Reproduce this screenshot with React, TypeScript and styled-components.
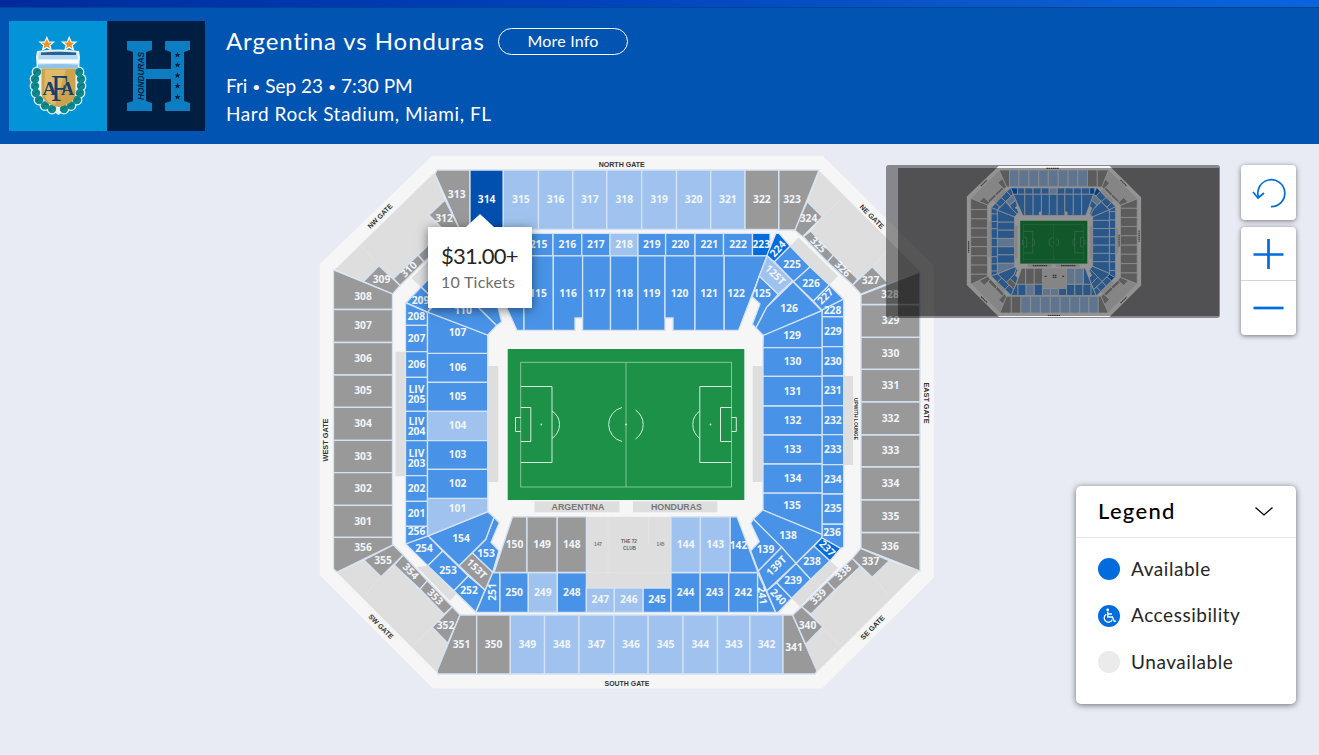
import React, {FC} from 'react';
import styled, {createGlobalStyle} from 'styled-components';

const BRAND = '#0154b1';
const ACTION = '#026cdf';
const SURFACE = '#e8ebf3';
const FONT = 'Lato, "Open Sans", sans-serif';

const GlobalStyle = createGlobalStyle`
  * { box-sizing: border-box; }
  body { margin: 0; background: ${SURFACE}; font-family: ${FONT}; overflow: hidden; }
`;

const Page = styled.div`
  display: flex;
  flex-direction: column;
  height: 755px;
`;
const TopStrip = styled.div`
  height: 8px;
  flex: none;
  border-bottom: 1px solid #02458f;
  background: linear-gradient(90deg, #002b9c 0%, #0043bd 45%, #0a58cb 75%, #0a64de 100%);
`;
const Header = styled.header`
  display: flex;
  flex: none;
  height: 136px;
  padding: 13px 9px 0;
  background: ${BRAND};
  color: #fff;
`;
const Teams = styled.div`
  display: flex;
  width: 196px;
  height: 110px;
`;
const Info = styled.div`
  margin-left: 21px;
`;
const TitleRow = styled.div`
  display: flex;
  align-items: center;
  height: 40px;
`;
const Title = styled.h1`
  margin: 0;
  width: 258px;
  padding-bottom: 2px;
  font-size: 24px;
  font-weight: 400;
  letter-spacing: 0.92px;
  white-space: nowrap;
`;
const MoreInfo = styled.button`
  width: 130px;
  height: 27px;
  margin-left: 14px;
  padding: 0 0 2px;
  border: 1px solid #fff;
  border-radius: 14px;
  background: none;
  color: #fff;
  font: 400 16px ${FONT};
  letter-spacing: 0.2px;
`;
const Detail = styled.div<{$spacing: string}>`
  font-size: 19px;
  line-height: 27px;
  letter-spacing: ${p => p.$spacing};
`;
const Bullet = styled.small`
  font-size: 14px;
  vertical-align: 1px;
`;
const Details = styled.div`
  margin-top: 11px;
`;

const MapArea = styled.main`
  position: relative;
  flex: 1;
`;
const MapSvg = styled.svg`
  display: block;
  width: 1319px;
  height: 611px;
`;
const Tooltip = styled.div`
  position: absolute;
  left: 428px;
  top: 83px;
  width: 104px;
  height: 81px;
  padding: 14px 0 0 13px;
  background: #fff;
  box-shadow: 0 2px 10px rgba(0, 0, 0, 0.5);
  white-space: nowrap;

  &::before {
    content: '';
    position: absolute;
    left: 38px;
    top: -13px;
    border: solid transparent;
    border-width: 0 14px 13px;
    border-bottom-color: #fff;
  }
`;
const Price = styled.div`
  font-size: 22px;
  line-height: 29px;
  letter-spacing: -0.7px;
  color: #262626;
`;
const Count = styled.div`
  font-size: 16px;
  line-height: 24px;
  letter-spacing: 0.25px;
  color: #6c6c6c;
`;
const MiniMap = styled.div`
  position: absolute;
  left: 886px;
  top: 21px;
  width: 334px;
  height: 153px;
  border-radius: 3px;
  background: rgba(0, 0, 0, 0.42);
  overflow: hidden;

  svg { display: block; }
`;
const MiniShade = styled.div`
  position: absolute;
  inset: 3px 1px 2px 12px;
  background: rgba(0, 0, 0, 0.4);
`;
const Controls = styled.div`
  position: absolute;
  left: 1241px;
  top: 21px;
  display: flex;
  flex-direction: column;
  gap: 7px;
`;
const ControlGroup = styled.div`
  width: 55px;
  border-radius: 4px;
  background: #fff;
  box-shadow: 0 1px 5px rgba(0, 0, 0, 0.5);
`;
const Control = styled.button<{$height: number; $line?: boolean}>`
  display: block;
  width: 55px;
  height: ${p => p.$height}px;
  padding: 0;
  border: 0;
  border-top: ${p => (p.$line ? '1px solid #d5d5d5' : '0')};
  background: none;

  svg { display: block; margin: auto; }
`;
const LegendCard = styled.section`
  position: absolute;
  left: 1076px;
  top: 342px;
  width: 220px;
  height: 218px;
  border-radius: 5px;
  background: #fff;
  box-shadow: 0 1px 6px rgba(0, 0, 0, 0.55);
`;
const LegendHead = styled.div`
  display: flex;
  align-items: center;
  justify-content: space-between;
  height: 52px;
  padding: 0 22px 2px;
  border-bottom: 1px solid #e6e6e6;
  color: #000;
  font-size: 22px;
  font-weight: 500;
  letter-spacing: 1.3px;
`;
const LegendRows = styled.div`
  display: flex;
  flex-direction: column;
  gap: 24.5px;
  padding: 20px 22px;
`;
const LegendRow = styled.div`
  display: flex;
  align-items: center;
  height: 22px;
  gap: 11px;
  color: #262626;
  font-size: 19px;
  letter-spacing: 0.55px;
`;
const LegendText = styled.span`
  padding-bottom: 2px;
`;
const Dot = styled.span<{$color: string}>`
  display: flex;
  width: 22px;
  height: 22px;
  border-radius: 50%;
  background: ${p => p.$color};
`;

type Kind = 'open' | 'faded' | 'off' | 'hot' | 'selected';
type Section = {id: string; kind: Kind; points: string; x: number; y: number; turn?: number};

const FILL: Record<Kind, string> = {
  open: '#4893e7',
  faded: '#9fc3ee',
  off: '#999999',
  hot: '#026cdf',
  selected: '#0150b0',
};

const poly = (id: string, kind: Kind, points: string, x: number, y: number, turn?: number): Section =>
  ({id, kind, points, x, y, turn});

// a run of neighbouring blocks, left to right
const row = (ids: string[], kinds: Kind[], xs: number[], top: number, bottom: number, labelY: number) =>
  ids.map((id, i) => poly(
    id, kinds[i],
    `${xs[i]},${top} ${xs[i + 1]},${top} ${xs[i + 1]},${bottom} ${xs[i]},${bottom}`,
    (xs[i] + xs[i + 1]) / 2, labelY,
  ));

// a run of neighbouring blocks, top to bottom
const column = (ids: string[], faded: string[], kind: Kind, ys: number[], left: number, right: number) =>
  ids.map((id, i) => poly(
    id, faded.includes(id) ? 'faded' : kind,
    `${left},${ys[i]} ${right},${ys[i]} ${right},${ys[i + 1]} ${left},${ys[i + 1]}`,
    (left + right) / 2, (ys[i] + ys[i + 1]) / 2,
  ));

const fill = (kind: Kind, n: number): Kind[] => Array(n).fill(kind);

const SECTIONS: Section[] = [
  // upper level
  poly('313', 'off', '437,170 470,170 470,230 460,230 435,174', 456.7, 195),
  poly('312', 'off', '445,200 429,215 451,237 460,230', 444, 219),
  poly('311', 'off', '443,231 418,255 424,262 450,237', 434, 246, -45),
  poly('310', 'off', '393.5,278.5 400,285.5 424,262 418,255', 409, 269.5, -43),
  poly('309', 'off', '379,265.7 363.5,281.5 392.7,294 400,285.5', 381.5, 280),
  poly('308', 'off', '333.5,270 392.5,294 392.5,309.5 333.5,309.5', 363, 297),
  ...column(['307', '306', '305', '304', '303', '302', '301'], [], 'off',
    [309.5, 342.5, 375, 407.3, 440.3, 472.7, 505.3, 537.4], 333.5, 392.5),
  poly('356', 'off', '333.5,537.4 392.5,537.4 392.5,545 337,572 333.5,569', 363, 548),
  poly('355', 'off', '393.3,545 403.3,555 381,576.7 364,560', 383, 561),
  poly('354', 'off', '403.3,555 427.3,580.7 420,589.3 394.3,565', 410.5, 571.5, 45),
  poly('353', 'off', '427.3,580.7 452.3,606.7 444,614.3 420,589.3', 435, 597, 45),
  poly('352', 'off', '452.3,606.7 460,615 447.7,643.3 432.3,627.3', 445.5, 626),
  poly('351', 'off', '460,615 476.7,615 476.7,674 438,674 437,671', 461.5, 645),
  ...row(['350', '349', '348', '347', '346', '345', '344', '343', '342'],
    ['off', ...fill('faded', 8)],
    [476.7, 510.3, 544.5, 579, 613.7, 648.2, 683, 717.5, 750, 783], 615, 674, 645),
  poly('341', 'off', '783,615 792.5,615 817,671 815,674 783,674', 794, 648),
  poly('340', 'off', '792.7,615 801.7,606.7 822.7,626.7 805.7,644.3', 807.5, 626),
  poly('339', 'off', '801.7,606.7 827.3,581.7 835,590 811,614', 818.5, 597, -45),
  poly('338', 'off', '827.3,581.7 852.3,558.3 860,566.7 835,590', 843.5, 572.5, -45),
  poly('337', 'off', '852.3,558.3 860.7,548.3 889.3,560.7 872.3,577.3', 870.5, 562),
  poly('336', 'off', '861,532.5 920,532.5 920,571 861,548', 890, 547),
  ...column(['329', '330', '331', '332', '333', '334', '335'], [], 'off',
    [304.5, 337.3, 369.3, 402, 435, 467, 500, 532.5], 861, 920),
  poly('328', 'off', '861,295 920,272 920,304.5 861,304.5', 890, 295),
  poly('327', 'off', '872.3,266.7 888.3,283.3 860.7,294 852.7,285', 870.5, 281),
  poly('326', 'off', '833.3,255 857.7,279 852.7,285 827.3,261.7', 842.5, 269, 45),
  poly('325', 'off', '810.7,231 833.3,255 827.3,261.7 803.3,236.7', 818, 245, 45),
  poly('324', 'off', '807.3,201.7 822.3,216.7 802.7,236.7 794.7,230', 808.5, 219),
  poly('323', 'off', '778.7,170 819,170 795,230 778.7,230', 792, 200),
  ...row(['314', '315', '316', '317', '318', '319', '320', '321', '322'],
    ['selected', ...fill('faded', 7), 'off'],
    [470, 503.3, 538.5, 572.8, 606.8, 641.7, 676.5, 710.7, 745, 778.7], 170, 229.5, 200),

  // club level
  ...row(['214', '215', '216', '217', '218', '219', '220', '221', '222', '223'],
    ['open', 'open', 'open', 'open', 'faded', 'open', 'open', 'open', 'open', 'hot'],
    [498, 524, 553, 581.8, 610, 638, 665.6, 695, 723.5, 752.5, 770], 233.3, 255.8, 245),
  poly('213', 'hot', '474,233.3 498,233.3 498,255.8 483,255.8', 489, 245),
  poly('212', 'open', '474,233.3 460,246 475.7,261.7 483,255.8', 472, 248, -45),
  poly('211', 'open', '460,246 440,266.7 456.7,281.7 475.7,261.7', 458, 264),
  poly('210', 'open', '440,266.7 421,287 436,301 456.7,281.7', 439, 284),
  poly('209', 'open', '421,287 434,300 428,312.3 406,302.7', 420.5, 301),
  poly('208', 'open', '405.5,302.7 427.5,312.3 427.5,325.3 405.5,325.3', 416.3, 317),
  ...column(['207', '206', 'LIV 205', 'LIV 204', 'LIV 203', '202', '201'], [], 'open',
    [325.3, 351.7, 377.3, 411.3, 440.7, 475.7, 501.3, 526.3], 405.5, 427.5),
  poly('256', 'open', '405.5,526.3 427.5,526.3 427.5,536 405.5,544', 416.5, 532),
  poly('254', 'open', '405.7,544 428.3,536 442.7,551 427.7,565.7', 424, 549),
  poly('253', 'open', '442.7,551 468.3,576 454,590.7 427.7,565.7', 448, 571),
  poly('252', 'open', '468.3,576 485,590 475.7,612 454,590.7', 469, 591),
  poly('251', 'open', '492.7,572.6 500,572.6 500,612.3 476,612.3', 493, 592, -90),
  ...row(['250', '249', '248'], ['open', 'faded', 'open'], [500, 528.3, 557.3, 586.4], 572.7, 612.3, 593),
  ...row(['247', '246', '245'], ['faded', 'faded', 'open'], [586.4, 614.3, 643.2, 671], 588, 612.3, 600),
  ...row(['244', '243', '242'], fill('open', 3), [671, 700.2, 728.8, 757.6], 572.7, 612.3, 593),
  poly('241', 'open', '757.6,572.7 775.7,612.3 757.6,612.3', 762, 595.5, 82),
  poly('240', 'open', '776.7,582.7 791.7,598.3 778.3,612.3 775.7,612.3 766.7,590.7', 778, 597, 45),
  poly('239', 'open', '796,563.3 810.7,579.3 791.7,598.3 776.7,582.7', 793, 581),
  poly('238', 'open', '814,546 830,560.7 810.7,579.3 796,563.3', 812, 562),
  poly('237', 'hot', '821.7,537.7 840.7,548.3 830,560.7 814,546', 827, 548.5, 45),
  poly('236', 'open', '822,524 843.7,524 843.7,547 840.7,548.3 822,537.7', 832, 533),
  ...column(['229', '230', '231', '232', '233', '234', '235'], [], 'open',
    [316.7, 346.7, 376, 405.7, 434.7, 464.7, 494, 524], 822, 843.7),
  poly('228', 'open', '843.7,299 843.7,316.7 822,316.7 822,310', 832.5, 311),
  poly('227', 'open', '829.3,285 843.3,299 821.7,310 813.3,301', 825.5, 296.5, -45),
  poly('226', 'open', '810,266.7 829.3,285 813.3,301 793.3,281.7', 811, 284),
  poly('225', 'open', '790,246 810,266.7 793.3,281.7 774.3,261.7', 792, 265),
  poly('224', 'hot', '776,233.3 779,233.3 790,246 774.3,261.7 766.7,255.7', 778, 249, -48),

  // lower level
  poly('114', 'open', '483,255.8 524,255.8 524,330.4 517,330.4', 508, 294),
  poly('115', 'open', '524,255.8 553.3,255.8 553.3,330.4 524,330.4', 538, 294),
  poly('116', 'open', '553.3,255.8 582.6,255.8 582.6,318 575,318 575,330.4 553.3,330.4', 568, 294),
  ...row(['117', '118', '119'], fill('open', 3), [582.6, 610.5, 638, 665], 255.8, 330.4, 294),
  poly('120', 'open', '665,255.8 695,255.8 695,330.4 673,330.4 673,318 665,318', 679.5, 294),
  poly('121', 'open', '695,255.8 724.2,255.8 724.2,330.4 695,330.4', 709, 294),
  poly('122', 'open', '724.2,255.8 767,255.8 738.5,330.4 724.2,330.4', 736, 294),
  poly('125', 'open', '759.3,276 778.3,294.3 766.7,307.3 756,328 752.3,324.3 760,304 752.3,296.7', 762, 294),
  poly('125T', 'faded', '767.3,255.7 792.7,280.7 778.3,294.3 759.3,276', 775, 275, 45),
  poly('126', 'open', '793,281.7 821.7,310.7 763.3,335.5 756,328 766.7,307.3', 789, 309),
  poly('129', 'open', '763.3,335.5 822,310.7 822,348 763,348', 792, 336),
  ...column(['130', '131', '132', '133', '134'], [], 'open',
    [347.7, 376.4, 406, 435, 464, 493.2], 763, 822),
  poly('135', 'open', '763,493.2 822,493.2 822,534.5 763,510', 792, 506),
  poly('138', 'open', '762.7,510 822,534.5 821.7,537.7 796,563.3 753.3,519', 788, 536),
  poly('139', 'open', '753.3,519 781.7,547.3 758.3,571 750.7,550.7 759.3,541.7 750.7,523.3', 765.5, 550),
  poly('139T', 'open', '781.7,547.3 796,563.3 766.7,590.7 758.3,571', 776.5, 566, -45),
  poly('142', 'open', '730,516.8 737,516.8 758,572.5 730,572.5', 738.5, 546),
  ...row(['144', '143'], ['faded', 'faded'], [671, 700.4, 730], 516.8, 572.5, 545),
  poly('150', 'off', '512.5,516.8 527,516.8 527,572.5 494,572.5', 514.5, 545),
  ...row(['149', '148'], ['off', 'off'], [527, 557.2, 586.4], 516.8, 572.5, 545),
  poly('153T', 'off', '472.3,552.7 492.7,572.3 485,590 459,565.7', 476.5, 569, 45),
  poly('153', 'open', '494,517.3 499.3,522.7 491,542.3 499,550.7 492.7,572.3 472.3,552.7 485.7,539.3', 486, 554),
  poly('154', 'open', '428.3,536 487.7,511.7 494,517.3 485.7,539.3 459,565.7', 461, 539),
  poly('101', 'faded', '427.5,498.3 487.7,498.3 487.7,511.7 427.5,536', 457.5, 509),
  ...column(['106', '105', '104', '103', '102'], ['104'], 'open',
    [353.3, 382.3, 411.3, 440.7, 469.3, 498.3], 427.5, 487.7),
  poly('107', 'open', '427.5,312 487.7,335 487.7,353.3 427.5,353.3', 457.5, 333),
  poly('110', 'open', '427.5,312 456.7,281.7 478,307 496.7,325.5 487.7,335', 463, 311),
  poly('111', 'open', '471,294 492,277 497,297 490,304 498,308 501.7,321.7 496.7,325.5 478,307', 487, 294),
  poly('111T', 'faded', '483,255.8 491,276 471,294 457,281', 475, 275, -45),
];

// blocks the price callout sits on keep their shape but not their number
const COVERED = ['210', '211', '212', '213', '214', '111', '111T', '114', '311'];

const CORNERS = [
  '434,173 335,269.5 363.5,281.5 379,265.7 393.5,278.5 443,231 429,215 445,200',
  '819.5,171 920,271.5 888.3,283.3 872.3,266.7 857.7,279 810.7,231 822.3,216.7 807.3,201.7',
  '817,672 919,571 889.3,560.7 872.3,577.3 860,566.7 811,614 822.7,626.7 805.7,644.3',
  '337,572.5 436.5,672 447.7,643.3 432.3,627.3 444,614.3 394.3,565 381,576.7 364,560',
  '411.5,278.3 421,287 460,246 451,238',
  '798.5,237.5 838,276 829.3,285 790,246.5',
  '830,560.7 838,568 800,606.7 791.7,598.3',
  '427.7,565.7 456,594 450,601 417,567',
];

const Blocks = styled.g<{$mini: boolean}>`
  stroke: ${p => (p.$mini ? '#f0f0f0' : '#d5e2f3')};
  stroke-width: ${p => (p.$mini ? 2.6 : 1.3)};
`;
const Labels = styled.g`
  fill: #f1f5fa;
  font: 700 10.3px "Open Sans", "Noto Sans", sans-serif;
  text-anchor: middle;
`;
const Signs = styled.g`
  fill: #333;
  font: 700 7px "Liberation Sans", sans-serif;
  text-anchor: middle;
`;
const Sign: FC<{x: number; y: number; turn?: number; width: number; size?: number; color?: string; text: string}> =
  ({x, y, turn = 0, width, size = 7, color, text}) => (
    <text transform={`translate(${x} ${y}) rotate(${turn})`} y={size * 0.36} textLength={width}
      lengthAdjust="spacingAndGlyphs" fontSize={size} fill={color} style={{fontSize: size}}>{text}</text>
  );

const Pitch: FC = () => (
  <g>
    <rect x="507.7" y="349" width="236.6" height="151" fill="#1d9147" />
    <g fill="none" stroke="#8fcaa3" strokeWidth="0.9">
      <rect x="520.7" y="362.3" width="210.8" height="124.7" />
      <path d="M626 362.3V487" />
    </g>
    <g fill="none" stroke="#d8eddf" strokeWidth="1">
      <path d="M520.7 386.5H552V462.5H520.7M520.7 407.5H530.8V441.5H520.7M520.7 417.5H515.5V431.5H520.7" />
      <path d="M731.5 386.5H699.8V462.5H731.5M731.5 407.5H720.5V441.5H731.5M731.5 417.5H736.3V431.5H731.5" />
      <path d="M552 411Q559.5 416 559.5 424.5T552 438.5M699.8 411Q692.8 416 692.8 424.5T699.8 438.5" />
      <path d="M622 407.5A17.5 17.5 0 0 0 622 441.5M635.5 410A17.5 17.5 0 0 1 635.5 439" />
    </g>
    <g fill="#d8eddf">
      <circle cx="541.3" cy="424.5" r="0.9" />
      <circle cx="626" cy="424.5" r="0.9" />
      <circle cx="710.5" cy="424.5" r="0.9" />
    </g>
  </g>
);

const fillOf = (s: Section, mini: boolean) =>
  mini && s.kind === 'selected' ? FILL.faded : FILL[s.kind];

const MapSigns: FC = () => (
  <Signs>
    <Sign x={621.7} y={164.5} width={46} text="NORTH GATE" />
    <Sign x={627} y={683} width={45} text="SOUTH GATE" />
    <Sign x={325.5} y={440} width={43} turn={-90} text="WEST GATE" />
    <Sign x={926.7} y={403} width={41} turn={90} text="EAST GATE" />
    <Sign x={380} y={216} width={32} turn={-45} text="NW GATE" />
    <Sign x={872} y={216.5} width={31} turn={45} text="NE GATE" />
    <Sign x={381} y={626.5} width={32} turn={45} text="SW GATE" />
    <Sign x={872.5} y={627.5} width={31} turn={-45} text="SE GATE" />
    <Sign x={856} y={419} width={42} turn={90} size={5} text="UPWITH LOUNGE" />
    <Sign x={578} y={507} width={53} size={9.5} color="#777" text="ARGENTINA" />
    <Sign x={676.5} y={507} width={51} size={9.5} color="#777" text="HONDURAS" />
    <Sign x={598} y={544.5} width={8} size={4.5} color="#777" text="147" />
    <Sign x={629} y={541.5} width={16} size={5} color="#666" text="THE 72" />
    <Sign x={629.5} y={548.5} width={13} size={5} color="#666" text="CLUB" />
    <Sign x={660.5} y={544.5} width={8} size={4.5} color="#777" text="145" />
  </Signs>
);

// the overview is too small for lettering, so signs become short bars
const MiniSigns: FC = () => (
  <g stroke="#333" strokeWidth="4" strokeDasharray="6 1.5" opacity="0.8">
    <path d="M600 164.500H644M605 683H649M326 420V461M926.700 383V423" />
    <path d="M369 227L391 205M861 205L883 227M370 616L392 638M861 639L883 617M856 398V440" />
    <path d="M552 507H604M651 507H702M594 545H602M622 541.500H637M622 548.500H637M656 545H664" />
  </g>
);

const Stadium: FC<{mini?: boolean}> = ({mini = false}) => (
  <g>
    <polygon points="432,156 823,156 933.8,266 933.8,577.5 822,688.5 433,688.5 319.7,575 319.7,264" fill="#f6f6f6" />
    <g fill="#dedede">
      {CORNERS.map(points => <polygon key={points} points={points} />)}
      <rect x="395.5" y="351.7" width="10" height="124.5" />
      <rect x="487.7" y="366" width="10.6" height="116" />
      <rect x="752.7" y="366" width="10.3" height="116" />
      <rect x="843.7" y="376" width="9.3" height="89" />
      <rect x="586.4" y="516.8" width="84.6" height="71" />
      <rect x="534.5" y="501.3" width="85" height="11" />
      <rect x="633" y="501.3" width="84.3" height="11" />
    </g>
    <g stroke="#e8e8e8" strokeWidth="0.6" fill="none">
      <path d="M361 245L375 262M841 199L822 217M363 597L381 577M413 646L432 627M840 646L822 627M888 594L872 577M888 250L872 267" />
      <path d="M608 517V572M648.7 517V545M587 572.5H671" />
    </g>
    <Blocks $mini={mini}>
      {SECTIONS.map(s => <polygon key={s.id} points={s.points} fill={fillOf(s, mini)} />)}
    </Blocks>
    <Pitch />
    {!mini && (
      <Labels>
        {SECTIONS.filter(s => !COVERED.includes(s.id)).map(s => (
          <text key={s.id} transform={`translate(${s.x} ${s.y}) rotate(${s.turn || 0})`}>
            {s.id.startsWith('LIV')
              ? <><tspan x="0" y="-1.5">LIV</tspan><tspan x="0" y="8.500">{s.id.slice(4)}</tspan></>
              : <tspan x="0" y="3.300">{s.id}</tspan>}
          </text>
        ))}
      </Labels>
    )}
    {mini ? <MiniSigns /> : <MapSigns />}
  </g>
);

const STAR = '0,-7 1.9,-2.4 6.8,-2.2 3,0.9 4.3,5.7 0,3 -4.3,5.7 -3,0.9 -6.8,-2.2 -1.9,-2.4';
const LEAVES = [
  [28, 51], [26, 58], [26, 65], [27, 72], [30, 79], [36, 84.5], [43, 88],
  [70, 51], [72, 58], [72, 65], [71, 72], [68, 79], [62, 84.5], [55, 88],
];

const ArgentinaCrest: FC = () => (
  <svg width="98" height="110" viewBox="0 0 98 110">
    <rect width="98" height="110" fill="#0294d6" />
    <g fill="#ee9025" stroke="#fff" strokeWidth="1.2">
      <polygon points={STAR} transform="translate(37.8 23.3)" />
      <polygon points={STAR} transform="translate(60.2 23.3)" />
    </g>
    <g fill="#e6f4fa">
      <path d="M28 30Q49 27 70 30L71 36 70 50V80L49.500 94 28 80V50L27 36Z" />
      {LEAVES.map(([x, y]) => <circle key={`${x}-${y}`} cx={x} cy={y} r="5.400" />)}
    </g>
    <g fill="#118a8b">
      {LEAVES.map(([x, y]) => <circle key={`${x}-${y}`} cx={x} cy={y} r="4.200" />)}
    </g>
    <g fill="none" stroke="#0a6380" strokeWidth="0.9">
      {LEAVES.map(([x, y]) => <path key={`${x}-${y}`} d={`M${x - 2.5} ${y + 2}Q${x} ${y - 3} ${x + 2.5} ${y - 1}`} />)}
    </g>
    <path d="M30 31.500Q49 29 68 31.500L69 41V47H29V41Z" fill="#b5d9f1" />
    <path d="M32 31.500Q49 30 67 31.500V34H32Z" fill="#2c6190" />
    <path d="M29 38.500H69V42.500H29Z" fill="#fff" />
    <path d="M29 44Q49 42 69 44V47.500H29Z" fill="#8fc4e8" />
    <path d="M32.500 47.500H66.500V73Q65 83 49.500 86Q34 83 32.500 73Z" fill="#cda24c" />
    <path d="M36 48.500H57L46 84Q37 82 35 73Z" fill="#dfba67" />
    <g fill="#153f6e" fontFamily="Liberation Serif, serif" fontWeight="700">
      <text x="33.500" y="74" fontSize="19" textLength="14" lengthAdjust="spacingAndGlyphs">A</text>
      <text x="52" y="74" fontSize="19" textLength="13" lengthAdjust="spacingAndGlyphs">A</text>
      <text x="42" y="80" fontSize="37" textLength="17" lengthAdjust="spacingAndGlyphs" fontWeight="400">F</text>
    </g>
  </svg>
);

const HondurasLogo: FC = () => (
  <svg width="98" height="110" viewBox="0 0 98 110">
    <rect width="98" height="110" fill="#001e42" />
    <path d="M20 20H45V29L39 31V48H64V31L58 29V20H83V29L77 31V80L83 82V90H58V82L64 80V58H39V80L45 82V90H20V82L26 80V31L20 29Z" fill="#0b7dc0" />
    <g fill="#001e42">
      <text transform="translate(36.500 79) rotate(-90)" textLength="48" lengthAdjust="spacingAndGlyphs"
        fontFamily="Liberation Sans, sans-serif" fontSize="8.500" fontWeight="700" fontStyle="italic">HONDURAS</text>
      {[34, 44, 54.5, 65, 76].map(y => (
        <polygon key={y} points={STAR} transform={`translate(70.500 ${y}) scale(0.45)`} />
      ))}
    </g>
  </svg>
);

const App: FC = () => (
  <Page>
    <GlobalStyle />
    <TopStrip />
    <Header>
      <Teams>
        <ArgentinaCrest />
        <HondurasLogo />
      </Teams>
      <Info>
        <TitleRow>
          <Title>Argentina vs Honduras</Title>
          <MoreInfo>More Info</MoreInfo>
        </TitleRow>
        <Details>
          <Detail $spacing="0px">Fri <Bullet>•</Bullet> Sep 23 <Bullet>•</Bullet> 7:30 PM</Detail>
          <Detail $spacing="0.58px">Hard Rock Stadium, Miami, FL</Detail>
        </Details>
      </Info>
    </Header>
    <MapArea>
      <MapSvg viewBox="0 144 1319 611">
        <Stadium />
      </MapSvg>
      <Tooltip>
        <Price>$31.00+</Price>
        <Count>10 Tickets</Count>
      </Tooltip>
      <MiniMap>
        <svg width="334" height="153" viewBox="0 0 334 153">
          <g transform="translate(-9.900 -43.300) scale(0.2838)">
            <Stadium mini />
          </g>
        </svg>
        <MiniShade />
      </MiniMap>
      <Controls>
        <ControlGroup>
          <Control $height={55} aria-label="Reset">
            <svg width="36" height="36" viewBox="0 0 36 36" fill="none" stroke={ACTION} strokeWidth="1.700">
              <path d="M20 31.700A13.500 13.500 0 1 0 7.500 22.500" />
              <path d="M2 17L7 23L13 18" />
            </svg>
          </Control>
        </ControlGroup>
        <ControlGroup>
          <Control $height={53} aria-label="Zoom in">
            <svg width="31" height="31" viewBox="0 0 31 31" stroke={ACTION} strokeWidth="2.700">
              <path d="M0.500 16.500H30.500M15.500 1V31" />
            </svg>
          </Control>
          <Control $height={55} $line aria-label="Zoom out">
            <svg width="31" height="31" viewBox="0 0 31 31" stroke={ACTION} strokeWidth="2.700">
              <path d="M0.500 15H30.500" />
            </svg>
          </Control>
        </ControlGroup>
      </Controls>
      <LegendCard>
        <LegendHead>
          Legend
          <svg width="20" height="12" viewBox="0 0 20 12" fill="none" stroke="#000" strokeWidth="1.300">
            <path d="M1.500 2.500L10 10L18.500 2.500" />
          </svg>
        </LegendHead>
        <LegendRows>
          <LegendRow><Dot $color={ACTION} /><LegendText>Available</LegendText></LegendRow>
          <LegendRow>
            <Dot $color={ACTION}>
              <svg width="22" height="22" viewBox="0 0 22 22" fill="none" stroke="#fff" strokeWidth="1.300">
                <circle cx="9.700" cy="4.800" r="1.400" fill="#fff" stroke="none" />
                <path d="M9.800 6.500V12H14.500L16.300 16.500L18 15.800M10 9H14" />
                <path d="M8.300 9.300A4.200 4.200 0 1 0 14.300 14.500" />
              </svg>
            </Dot>
            <LegendText>Accessibility</LegendText>
          </LegendRow>
          <LegendRow><Dot $color="#ebebeb" /><LegendText>Unavailable</LegendText></LegendRow>
        </LegendRows>
      </LegendCard>
    </MapArea>
  </Page>
);

export default App;
